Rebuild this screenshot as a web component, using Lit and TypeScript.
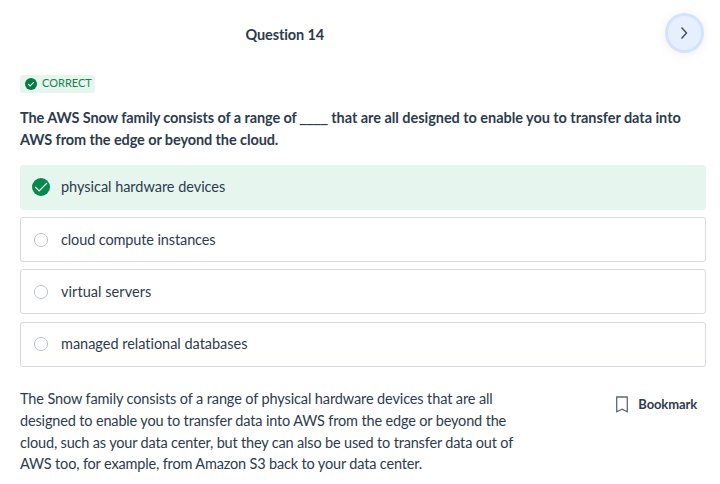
import { LitElement, html, css } from "lit";
import { customElement } from "lit/decorators.js";

const OPTIONS = [
  { text: "physical hardware devices", tracking: -0.03 },
  { text: "cloud compute instances", tracking: -0.12 },
  { text: "virtual servers", tracking: 0.05 },
  { text: "managed relational databases", tracking: -0.02 },
];

const EXPLANATION = [
  { text: "The Snow family consists of a range of physical hardware devices that are all", tracking: -0.12 },
  { text: "designed to enable you to transfer data into AWS from the edge or beyond the", tracking: -0.155 },
  { text: "cloud, such as your data center, but they can also be used to transfer data out of", tracking: -0.17 },
  { text: "AWS too, for example, from Amazon S3 back to your data center.", tracking: -0.16 },
];

@customElement("app-root")
export class AppRoot extends LitElement {
  static styles = css`
    :host { display: block; width: 720px; height: 484px; box-sizing: border-box; overflow: hidden; background: #fff; color: #2d3b4e; font-family: Lato, "Liberation Sans", sans-serif; font-variant-ligatures: none; }
    * { box-sizing: border-box; }
    .header { height: 75px; display: grid; grid-template-columns: 1fr 80px 1fr; padding: 13px 16px 0 0; }
    .title { grid-column: 1 / 3; justify-self: end; margin: 13px 68px 0 0; font-size: 14.5px; letter-spacing: -0.12px; line-height: 17px; font-weight: 700; white-space: nowrap; }
    .next { justify-self: end; width: 39px; height: 40px; padding: 0; border: 3px solid #d3e3fd; border-radius: 50%; background: #e6effd; box-shadow: 0 1px 12px #00000012; display: grid; place-items: center; color: #3f4d60; }
    .content { padding: 0 14px 0 20px; }
    .badge { display: flex; align-items: center; width: 75px; height: 18px; padding: 0 0 1px 5px; gap: 5px; border-radius: 3px; background: #e6f5ee; color: #17834f; font-size: 11px; }
    .badge span { padding-bottom: 2px; }
    .question { margin: 14px 0 13.7px; font-size: 14.5px; line-height: 22px; font-weight: 700; white-space: nowrap; }
    .line { display: block; height: 22px; }
    .tight { letter-spacing: -0.1px; }
    .loose { letter-spacing: -0.045px; }
    .blank { font-family: Carlito, Lato, sans-serif; font-size: 14px; line-height: 0; letter-spacing: 0; }
    .options { display: grid; gap: 7.33px; }
    .option { height: 45px; display: flex; align-items: center; gap: 11px; padding: 0 0 1px 11px; border: 1px solid #d7d9e0; border-radius: 3px; font-size: 14.5px; }
    .radio { margin-top: 1px; }
    .correct { background: #e6f5ee; border-color: #e6f5ee; }
    .footer { display: flex; justify-content: space-between; margin-top: 21.3px; }
    .explanation { margin: 0; font-size: 14.5px; line-height: 21.8px; white-space: nowrap; }
    .explanation span { display: block; }
    .bookmark { display: flex; gap: 10px; align-items: center; height: 32px; margin-right: 9px; font-size: 13px; letter-spacing: -0.12px; font-weight: 700; }
    .flag { margin-top: 2px; }
    svg { display: block; flex: none; }
  `;

  render() {
    return html`
      <header class="header"><div class="title">Question 14</div>
        <button class="next" aria-label="Next"><svg width="16" height="16" viewBox="0 0 16 16" fill="none" stroke="currentColor" stroke-width="1.4"><path d="m4.5 2.5 5 5.5-5 5.5"/></svg></button>
      </header>
      <main class="content">
        <div class="badge">${this.check(12)}<span>CORRECT</span></div>
        <h1 class="question"><span class="line"><span class="tight">The AWS Snow family consists of a range of </span><span class="blank">____</span><span class="loose"> that are all designed to enable you to transfer data into</span></span><span class="line tight">AWS from the edge or beyond the cloud.</span></h1>
        <div class="options">${OPTIONS.map((o, i) => html`<div class="option ${i === 0 ? "correct" : ""}">${i === 0 ? this.check(18) : this.radio()}<span style="letter-spacing:${o.tracking}px">${o.text}</span></div>`)}</div>
        <div class="footer">
          <p class="explanation">${EXPLANATION.map((l) => html`<span style="letter-spacing:${l.tracking}px">${l.text}</span>`)}</p>
          <div class="bookmark"><svg class="flag" width="12" height="17" viewBox="0 0 12 17" fill="none" stroke="#5c6979" stroke-width="1.3"><path d="M.7 1h10.6v14.8L6 13.2.7 15.8z"/></svg><span>Bookmark</span></div>
        </div>
      </main>`;
  }
  check(size: number) {
    const large = size > 12;
    return html`<svg width=${size} height=${size} viewBox="0 0 18 18"><circle cx="9" cy="9" r="9" fill=${large ? "#06894c" : "#067a46"}/><path d=${large ? "m3.2 8.8 4 4L15 5" : "m5 9.2 2.7 2.7 5.3-5.3"} fill="none" stroke="#fff" stroke-width=${large ? 1.2 : 1.6}/></svg>`;
  }
  radio() {
    return html`<svg class="radio" width="18" height="18" viewBox="0 0 18 18"><circle cx="9" cy="9" r="6.6" fill="#fff" stroke="#bfc4cf"/></svg>`;
  }
}
